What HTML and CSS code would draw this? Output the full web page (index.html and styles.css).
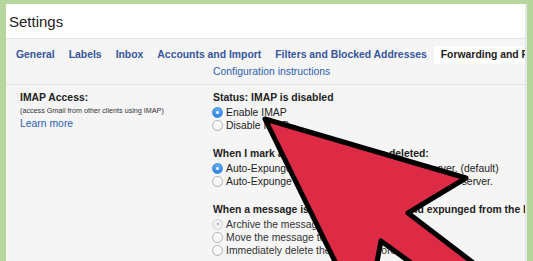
FILE: index.html
```html
<!DOCTYPE html>
<html lang="en">
<head>
<meta charset="utf-8">
<title>Settings</title>
<link rel="stylesheet" href="styles.css">
</head>
<body>
<div class="panel">
  <header class="head">Settings</header>
  <nav class="tabs">
    <span class="tab">General</span>
    <span class="tab">Labels</span>
    <span class="tab">Inbox</span>
    <span class="tab">Accounts and Import</span>
    <span class="tab">Filters and Blocked Addresses</span>
    <span class="tab tab-on">Forwarding and POP/IMAP</span>
  </nav>
  <div class="config">
    <div></div>
    <div class="link">Configuration instructions</div>
  </div>
  <section class="imap">
    <div class="left">
      <div class="label">IMAP Access:</div>
      <div class="hint">(access Gmail from other clients using IMAP)</div>
      <div class="link">Learn more</div>
    </div>
    <div class="right">
      <div class="group">
        <div class="heading">Status: IMAP is disabled</div>
        <div class="opt"><span class="radio on"></span>Enable IMAP</div>
        <div class="opt"><span class="radio"></span>Disable IMAP</div>
      </div>
      <div class="group">
        <div class="heading">When I mark a message in IMAP as deleted:</div>
        <div class="opt"><span class="radio on"></span>Auto-Expunge on - Immediately update the server. (default)</div>
        <div class="opt"><span class="radio"></span>Auto-Expunge off - Wait for the client to update the server.</div>
      </div>
      <div class="group">
        <div class="heading">When a message is marked as deleted and expunged from the last visible IMAP folder:</div>
        <div class="opt dim"><span class="radio dis"></span>Archive the message (default)</div>
        <div class="opt dim"><span class="radio"></span>Move the message to the Trash</div>
        <div class="opt dim"><span class="radio"></span>Immediately delete the message forever</div>
      </div>
    </div>
  </section>
</div>
<svg class="arrow" viewBox="0 0 533 261" width="533" height="261">
  <polygon points="265,119 466,178 408,213 522,300 462,300 381,241 377,262 350,292" fill="#dd2b45" stroke="#000" stroke-width="5" stroke-linejoin="round"/>
</svg>
</body>
</html>
```
FILE: styles.css
```css
html, body {
  margin: 0;
  padding: 0;
}
body {
  width: 533px;
  height: 261px;
  background: #b7d69e;
  font-family: "Liberation Sans", Arial, sans-serif;
  color: #222;
  overflow: hidden;
  position: relative;
}
.panel {
  margin: 4px 0 0 6px;
  width: 519px;
  height: 257px;
  background: #f5f5f5;
  border-right: 2px solid #e6e6e6;
  overflow: hidden;
  white-space: nowrap;
}
.head {
  height: 34px;
  display: flex;
  align-items: center;
  padding-left: 3px;
  background: #fff;
  border-bottom: 1px solid #e4e4e4;
  font-size: 15px;
  color: #222;
}
.tabs {
  display: flex;
  padding: 7px 0 0 3px;
}
.tab {
  padding: 0 7px;
  line-height: 18px;
  font-size: 10.4px;
  font-weight: bold;
  color: #35559c;
}
.tab-on {
  background: #fff;
  color: #222;
}
.config {
  display: grid;
  grid-template-columns: 207px 1fr;
  height: 20px;
  line-height: 16px;
  border-bottom: 1px solid #e2e2e2;
}
.link {
  font-size: 10.4px;
  color: #2f61b3;
}
.imap {
  display: grid;
  grid-template-columns: 207px 1fr;
  padding-top: 6px;
}
.left {
  padding-left: 14px;
}
.label {
  font-size: 10.4px;
  font-weight: bold;
  line-height: 13px;
}
.hint {
  font-size: 7.2px;
  line-height: 13px;
  color: #333;
}
.left .link {
  line-height: 13px;
}
.group + .group {
  margin-top: 15.5px;
}
.heading {
  font-size: 10.4px;
  font-weight: bold;
  line-height: 13px;
  margin-bottom: 1.5px;
}
.opt {
  display: flex;
  align-items: center;
  font-size: 10.4px;
  line-height: 13px;
  color: #222;
}
.opt.dim {
  color: #333;
}
.radio {
  box-sizing: border-box;
  width: 11px;
  height: 11px;
  margin: 0 3px 0 -1px;
  border-radius: 50%;
  border: 1px solid #b3b3b3;
  background: linear-gradient(#fff, #f2f2f2);
  flex: none;
  position: relative;
}
.radio.on {
  border-color: #3a86d9;
  background: linear-gradient(#63aef7, #2f86e8);
}
.radio.on::after {
  content: "";
  position: absolute;
  left: 3px;
  top: 3px;
  width: 3px;
  height: 3px;
  border-radius: 50%;
  background: #fff;
}
.radio.dis {
  border-color: #d4d4d4;
  background: #f0f0f0;
}
.radio.dis::after {
  content: "";
  position: absolute;
  left: 3.5px;
  top: 3.5px;
  width: 2px;
  height: 2px;
  border-radius: 50%;
  background: #9a9a9a;
}
.arrow {
  position: absolute;
  left: 0;
  top: 0;
}
```
